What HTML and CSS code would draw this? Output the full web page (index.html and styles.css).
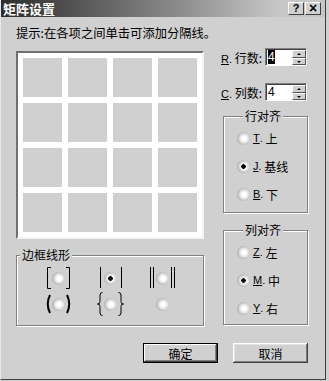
FILE: index.html
```html
<!DOCTYPE html>
<html lang="zh">

<head>
  <meta charset="UTF-8">
  <title>矩阵设置</title>
  <link rel="stylesheet" href="styles.css">
</head>

<body>
  <div class="window">
    <div class="titlebar">
      <span class="title">矩阵设置</span>
      <span class="tb-btn">?</span>
      <span class="tb-btn close">×</span>
    </div>
    <p class="hint">提示:在各项之间单击可添加分隔线。</p>

    <div class="main">
      <div class="left">
        <div class="preview">
          <div class="cell"></div><div class="cell"></div><div class="cell"></div><div class="cell"></div>
          <div class="cell"></div><div class="cell"></div><div class="cell"></div><div class="cell"></div>
          <div class="cell"></div><div class="cell"></div><div class="cell"></div><div class="cell"></div>
          <div class="cell"></div><div class="cell"></div><div class="cell"></div><div class="cell"></div>
        </div>

        <fieldset class="group border-group">
          <legend>边框线形</legend>
          <div class="styles">
            <div class="style">
              <svg width="6" height="22"><path d="M6 0.5H2.5V21.5H6" fill="none" stroke="#000"/></svg>
              <span class="radio"></span>
              <svg width="6" height="22"><path d="M0 0.5H3.5V21.5H0" fill="none" stroke="#000"/></svg>
            </div>
            <div class="style">
              <svg width="6" height="22"><path d="M3.5 0V21" stroke="#000"/></svg>
              <span class="radio checked"></span>
              <svg width="6" height="22"><path d="M3.5 0V21" stroke="#000"/></svg>
            </div>
            <div class="style">
              <svg width="6" height="22"><path d="M1.5 0V21M4.5 0V21" stroke="#000"/></svg>
              <span class="radio"></span>
              <svg width="6" height="22"><path d="M1.5 0V21M4.5 0V21" stroke="#000"/></svg>
            </div>
            <div class="style">
              <svg width="6" height="22"><path d="M5 2Q0.5 11 5 20" fill="none" stroke="#000" stroke-width="2"/></svg>
              <span class="radio"></span>
              <svg width="6" height="22"><path d="M1 2Q5.5 11 1 20" fill="none" stroke="#000" stroke-width="2"/></svg>
            </div>
            <div class="style">
              <svg width="6" height="24"><path d="M5.5 0.5Q3 0.5 3 3V9.5Q3 12 0.5 12Q3 12 3 14.5V21Q3 23.5 5.5 23.5" fill="none" stroke="#000"/></svg>
              <span class="radio"></span>
              <svg width="6" height="24"><path d="M0.5 0.5Q3 0.5 3 3V9.5Q3 12 5.5 12Q3 12 3 14.5V21Q3 23.5 0.5 23.5" fill="none" stroke="#000"/></svg>
            </div>
            <div class="style">
              <span class="spacer"></span>
              <span class="radio"></span>
              <span class="spacer"></span>
            </div>
          </div>
        </fieldset>
      </div>

      <div class="right">
        <div class="spin-row">
          <span class="label"><u class="key">R</u><span class="key">.</span> 行数:</span>
          <div class="spin">
            <span class="val"><span class="sel">4</span></span>
            <span class="arrows"><i class="up"></i><i class="down"></i></span>
          </div>
        </div>
        <div class="spin-row second">
          <span class="label"><u class="key">C</u><span class="key">.</span> 列数:</span>
          <div class="spin">
            <span class="val">4</span>
            <span class="arrows"><i class="up"></i><i class="down"></i></span>
          </div>
        </div>

        <fieldset class="group align rows">
          <legend>行对齐</legend>
          <div class="opt"><span class="radio"></span><u class="key">T</u><span class="key">.</span>&nbsp;上</div>
          <div class="opt"><span class="radio checked"></span><u class="key">J</u><span class="key">.</span>&nbsp;基线</div>
          <div class="opt"><span class="radio"></span><u class="key">B</u><span class="key">.</span>&nbsp;下</div>
        </fieldset>

        <fieldset class="group align cols">
          <legend>列对齐</legend>
          <div class="opt"><span class="radio"></span><u class="key">Z</u><span class="key">.</span>&nbsp;左</div>
          <div class="opt"><span class="radio checked"></span><u class="key">M</u><span class="key">.</span>&nbsp;中</div>
          <div class="opt"><span class="radio"></span><u class="key">Y</u><span class="key">.</span>&nbsp;右</div>
        </fieldset>
      </div>
    </div>

    <div class="buttons">
      <button class="btn default">确定</button>
      <button class="btn">取消</button>
    </div>
  </div>
</body>

</html>
```

FILE: styles.css
```css
body {
  margin: 0;
  background-color: #d0d0d0;
  font-family: "Noto Sans CJK SC", "Liberation Sans", sans-serif;
  font-size: 12px;
  color: #000;
}

.window {
  width: 326px;
  height: 380px;
  box-sizing: border-box;
  background-color: #d0d0d0;
  border-left: 1px solid #e8e8e8;
  border-right: 1px solid #404040;
  border-bottom: 1px solid #404040;
  display: flex;
  flex-direction: column;
}

/* タイトルバー */
.titlebar {
  height: 17px;
  display: flex;
  align-items: center;
  gap: 1px;
  padding: 0 4px 0 2px;
  background: linear-gradient(to right, #2c2c2c, #8c8c8c 55%, #c6c6c6 85%);
}

.title {
  flex: 1;
  color: #fff;
  font-weight: bold;
  font-size: 13px;
  line-height: 17px;
}

.tb-btn {
  width: 16px;
  height: 13px;
  box-sizing: border-box;
  background-color: #d0d0d0;
  border: 1px solid;
  border-color: #fff #404040 #404040 #fff;
  font: bold 11px/11px "Liberation Sans", sans-serif;
  text-align: center;
}

.tb-btn.close {
  font-size: 14px;
}

.hint {
  margin: 8px 0 0 15px;
  line-height: 16px;
  font-size: 12.3px;
}

.main {
  display: flex;
  align-items: flex-start;
  gap: 16px;
  margin-top: 7px;
  padding-left: 15px;
}

.left {
  margin-top: 3px;
  width: 188px;
}

.preview {
  width: 188px;
  height: 188px;
  box-sizing: border-box;
  padding: 5px;
  background-color: #fff;
  border: 2px solid;
  border-color: #707070 #f4f4f4 #f4f4f4 #707070;
  display: grid;
  grid-template-columns: repeat(4, 39px);
  grid-template-rows: repeat(4, 39px);
  gap: 6px;
}

.cell {
  background-color: #cfcfcf;
}

/* グループボックス */
.group {
  margin: 0;
  border: 1px solid #808080;
  box-shadow: 1px 1px 0 #fff, inset 1px 1px 0 #fff;
}

.group legend {
  padding: 0 2px;
  line-height: 14px;
  background-color: #d0d0d0;
}

.border-group {
  margin-top: 9px;
  padding: 3px 0 8px;
}

.border-group legend {
  margin-left: 3px;
}

.styles {
  display: grid;
  grid-template-columns: repeat(3, 52px);
  grid-auto-rows: 26px;
  justify-content: center;
}

.style {
  display: flex;
  align-items: center;
  justify-content: center;
  gap: 1px;
}

.spacer {
  width: 6px;
}

.radio {
  width: 13px;
  height: 13px;
  flex: none;
  border-radius: 50%;
  background: radial-gradient(circle at 55% 50%, #fff 0, #fff 22%, #dcdcdc 48%, #a4a4a4 78%, #6e6e6e 100%);
}

.radio.checked {
  background: radial-gradient(circle, #000 0, #000 2px, transparent 2.5px),
    radial-gradient(circle at 55% 50%, #fff 0, #fff 22%, #dcdcdc 48%, #a4a4a4 78%, #6e6e6e 100%);
}

.right {
  width: 88px;
}

.spin-row {
  height: 18px;
  display: flex;
  align-items: center;
  padding: 0 1px;
}

.spin-row.second {
  margin-top: 17px;
}

.key {
  font-family: "Liberation Sans", sans-serif;
  font-size: 11px;
}

.spin {
  width: 42px;
  height: 18px;
  box-sizing: border-box;
  margin-left: auto;
  display: flex;
  background-color: #fff;
  border: 1px solid;
  border-color: #808080 #fff #fff #808080;
  box-shadow: inset 1px 1px 0 #404040;
}

.val {
  flex: 1;
  padding: 2px 0 0 2px;
  font: 12px/13px "Liberation Sans", sans-serif;
}

.sel {
  background-color: #000;
  color: #fff;
}

.arrows {
  width: 14px;
  display: flex;
  flex-direction: column;
  padding: 1px 0 0;
}

.arrows i {
  flex: 1;
  position: relative;
  background-color: #d0d0d0;
  border: 1px solid;
  border-color: #fff #505050 #505050 #fff;
}

.arrows i::after {
  content: "";
  position: absolute;
  left: 4px;
  top: 2px;
  border-left: 2px solid transparent;
  border-right: 2px solid transparent;
}

.arrows .up::after {
  border-bottom: 2px solid #000;
}

.arrows .down::after {
  border-top: 2px solid #000;
}

.align {
  margin-left: 3px;
  width: 85px;
  box-sizing: border-box;
  padding: 1px 0 4px 13px;
}

.align legend {
  margin-left: 6px;
}

.align.rows {
  margin-top: 8px;
}

.align.cols {
  margin-top: 10px;
  padding-bottom: 2px;
}

.opt {
  height: 28px;
  display: flex;
  align-items: center;
}

.opt .radio {
  margin-right: 3px;
}

.buttons {
  display: flex;
  justify-content: flex-end;
  gap: 15px;
  margin-top: 17px;
  padding-right: 17px;
}

.btn {
  width: 75px;
  height: 20px;
  padding: 0;
  font-family: "Noto Sans CJK SC", sans-serif;
  font-size: 12px;
  color: #000;
  background-color: #d0d0d0;
  border: none;
  box-shadow: inset -1px -1px 0 #404040, inset 1px 1px 0 #fff, inset -2px -2px 0 #808080, inset 2px 2px 0 #e4e4e4;
}

.btn.default {
  border: 1px solid #000;
  box-shadow: inset -1px -1px 0 #404040, inset 1px 1px 0 #fff, inset -2px -2px 0 #808080;
}
```
